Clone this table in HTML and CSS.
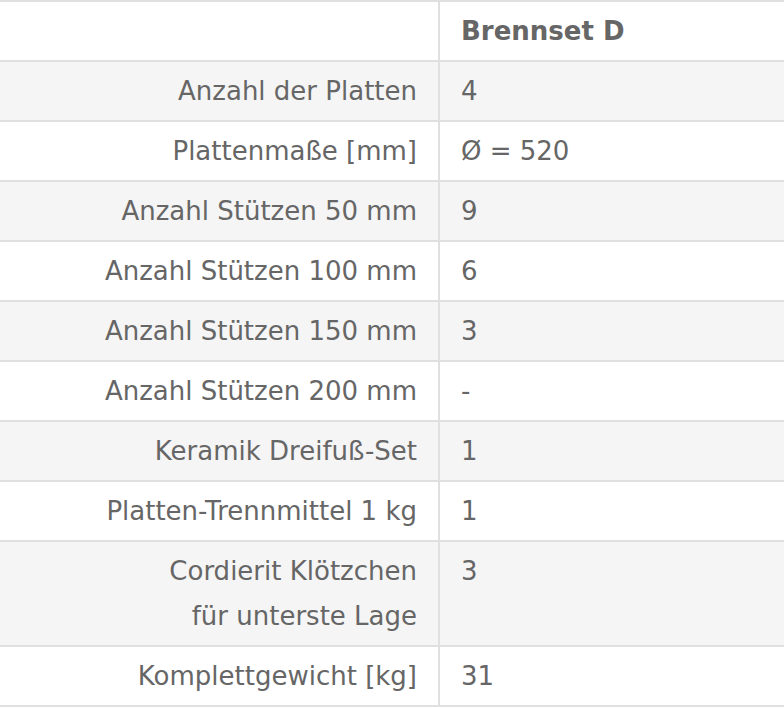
FILE: index.html
```html
<!DOCTYPE html>
<html lang="de">
<head>
<meta charset="utf-8">
<link rel="stylesheet" href="styles.css">
</head>
<body>
<table class="spec">
  <thead>
    <tr><th class="label"></th><th class="value">Brennset D</th></tr>
  </thead>
  <tbody>
    <tr class="odd"><td class="label">Anzahl der Platten</td><td class="value">4</td></tr>
    <tr><td class="label">Plattenmaße [mm]</td><td class="value">Ø = 520</td></tr>
    <tr class="odd"><td class="label">Anzahl Stützen 50 mm</td><td class="value">9</td></tr>
    <tr><td class="label">Anzahl Stützen 100 mm</td><td class="value">6</td></tr>
    <tr class="odd"><td class="label">Anzahl Stützen 150 mm</td><td class="value">3</td></tr>
    <tr><td class="label">Anzahl Stützen 200 mm</td><td class="value">-</td></tr>
    <tr class="odd"><td class="label">Keramik Dreifuß-Set</td><td class="value">1</td></tr>
    <tr><td class="label">Platten-Trennmittel 1 kg</td><td class="value">1</td></tr>
    <tr class="odd"><td class="label">Cordierit Klötzchen<br>für unterste Lage</td><td class="value">3</td></tr>
    <tr><td class="label">Komplettgewicht [kg]</td><td class="value">31</td></tr>
  </tbody>
</table>
</body>
</html>
```
FILE: styles.css
```css
html, body {
  margin: 0;
  padding: 0;
  background: #ffffff;
}
.spec {
  width: 784px;
  border-collapse: collapse;
  font-family: "DejaVu Sans", sans-serif;
  font-size: 26px;
  line-height: 45px;
  color: #666666;
  table-layout: fixed;
}
.spec th, .spec td {
  border-top: 2px solid #e0e0e0;
  border-bottom: 2px solid #e0e0e0;
  padding: 7px 21px 6px 21px;
  vertical-align: top;
  font-weight: normal;
}
.spec .label {
  width: 396px;
  text-align: right;
  border-right: 2px solid #e0e0e0;
}
.spec .value {
  text-align: left;
}
.spec th.value {
  font-weight: bold;
}
.spec tr.odd td {
  background: #f5f5f5;
}
```
